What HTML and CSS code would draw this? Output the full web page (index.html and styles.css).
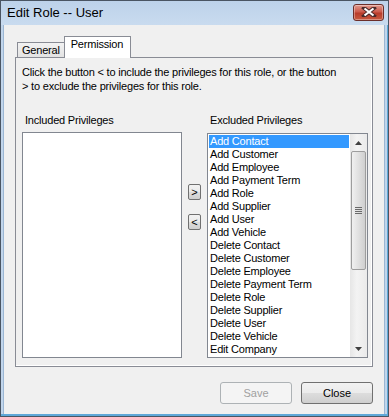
FILE: index.html
```html
<!DOCTYPE html>
<html lang="en">
<head>
<meta charset="utf-8">
<title>Edit Role -- User</title>
<link rel="stylesheet" href="styles.css">
</head>
<body>
<div class="window">
	<div class="titlebar">
		<span class="title">Edit Role -- User</span>
		<span class="closebox">
			<svg width="16" height="10" viewBox="0 0 16 10">
				<path d="M3 1 L13 9 M13 1 L3 9" stroke="#4a2a2a" stroke-width="4" stroke-linecap="square"/>
				<path d="M3.5 1.5 L12.5 8.5 M12.5 1.5 L3.5 8.5" stroke="#fff" stroke-width="2.2"/>
			</svg>
		</span>
	</div>
	<div class="client">
		<div class="tabs">
			<span class="tab">General</span>
			<span class="tab tab_on">Permission</span>
		</div>
		<div class="tabpage">
			<p class="hint">Click the button &lt; to include the privileges for this role, or the button &gt; to exclude the privileges for this role.</p>
			<div class="lists">
				<span class="lbl">Included Privileges</span>
				<span></span>
				<span class="lbl">Excluded Privileges</span>

				<div class="listbox incl"></div>
				<div class="movers">
					<button class="mover">&gt;</button>
					<button class="mover">&lt;</button>
				</div>
				<div class="listbox excl">
					<ul class="items">
						<li class="sel">Add Contact</li>
						<li>Add Customer</li>
						<li>Add Employee</li>
						<li>Add Payment Term</li>
						<li>Add Role</li>
						<li>Add Supplier</li>
						<li>Add User</li>
						<li>Add Vehicle</li>
						<li>Delete Contact</li>
						<li>Delete Customer</li>
						<li>Delete Employee</li>
						<li>Delete Payment Term</li>
						<li>Delete Role</li>
						<li>Delete Supplier</li>
						<li>Delete User</li>
						<li>Delete Vehicle</li>
						<li>Edit Company</li>
					</ul>
					<div class="vscroll">
						<span class="sc_btn"><svg width="7" height="4" viewBox="0 0 7 4"><path d="M0 4 L3.5 0 L7 4 Z" fill="#404040"/></svg></span>
						<div class="sc_track">
							<div class="sc_thumb"><span class="grip"></span></div>
						</div>
						<span class="sc_btn"><svg width="7" height="4" viewBox="0 0 7 4"><path d="M0 0 L7 0 L3.5 4 Z" fill="#404040"/></svg></span>
					</div>
				</div>
			</div>
		</div>
		<div class="footer">
			<button class="btn" disabled>Save</button>
			<button class="btn">Close</button>
		</div>
	</div>
</div>
</body>
</html>
```

FILE: styles.css
```css
body { margin: 0; font-family: "Liberation Sans", Arial, sans-serif; font-size: 11px; letter-spacing: -0.2px; color: #000; }

.window {
    width: 389px;
    height: 417px;
    box-sizing: border-box;
    display: flex;
    flex-direction: column;
    background: #c1d5eb;
    border: 1px solid #4a5563;
    padding: 0 3px 2px 2px;
    box-shadow: inset 0 -2px 0 #5fa8d8, inset -1px 0 0 #5fa8d8;
}

.titlebar {
    height: 24px;
    display: flex;
    align-items: center;
    justify-content: space-between;
    background: linear-gradient(#bdd2ea, #c9dbef);
    margin: 0 -3px 0 -2px;
    padding: 0 4px 0 6px;
}
.title { font-size: 13px; letter-spacing: 0; color: #000; margin-top: -1px; }
.closebox {
    width: 29px;
    height: 15px;
    margin-top: -2px;
    display: flex;
    align-items: center;
    justify-content: center;
    border: 1px solid #6b2e2a;
    border-radius: 3px;
    background: linear-gradient(#e19a8f, #cc5b4c 45%, #b83c2b 55%, #c85a40);
    box-shadow: inset 0 0 0 1px rgba(255,255,255,0.35);
}

.client {
    flex: 1;
    display: flex;
    flex-direction: column;
    background: #f0f0f0;
    border-left: 1px solid #9bb6d3;
    border-right: 1px solid #9bb6d3;
    padding: 12px 11px 9px 11px;
}

.tabs { display: flex; align-items: flex-end; padding-left: 2px; height: 20px; position: relative; z-index: 1; }
.tab {
    height: 14px;
    padding: 0 4px;
    border: 1px solid #898c95;
    border-bottom: none;
    background: linear-gradient(#f2f2f2, #e3e3e3);
    line-height: 15px;
}
.tab_on {
    height: 21px;
    margin-left: -1px;
    margin-bottom: -1px;
    padding: 0 7px 0 6px;
    background: #fff;
    line-height: 15px;
}

.tabpage {
    height: 310px;
    box-sizing: border-box;
    border: 1px solid #898c95;
    box-shadow: inset -1px -1px 0 #fff;
    padding: 7px 5px 0 6px;
}
.hint { margin: 0; line-height: 14px; max-width: 318px; }

.lists {
    margin-top: 20px;
    display: grid;
    grid-template-columns: 160px 25px 161px;
    grid-template-rows: 13px 226px;
    row-gap: 6px;
}
.lbl { line-height: 13px; padding-left: 3px; margin-top: 1px; }

.listbox { border: 1px solid #828790; background: #fff; box-sizing: border-box; }
.excl { display: flex; margin-top: 1px; height: 225px; }

.items { list-style: none; margin: 0; padding: 1px; flex: 1; }
.items li { height: 13px; line-height: 13px; padding-left: 1px; white-space: nowrap; }
.items .sel { background: #3399ff; color: #fff; }

.vscroll { width: 17px; display: flex; flex-direction: column; background: linear-gradient(90deg, #e6e6e6, #f3f3f3 40%, #eaeaea); }
.sc_btn { height: 17px; display: flex; align-items: center; justify-content: center; }
.sc_track { flex: 1; }
.sc_thumb {
    height: 119px;
    margin: 0 1px;
    box-sizing: border-box;
    border: 1px solid #9d9d9d;
    border-radius: 2px;
    background: linear-gradient(90deg, #f0f0f0, #e0e0e0 50%, #cfcfcf);
    display: flex;
    align-items: center;
    justify-content: center;
}
.grip { width: 7px; height: 7px; background: repeating-linear-gradient(#6a6a6a 0 1px, transparent 1px 2px); }

.movers { display: flex; flex-direction: column; gap: 14px; padding: 52px 0 0 6px; }
.mover {
    width: 13px;
    height: 16px;
    padding: 0;
    font: 11px "Liberation Sans", sans-serif;
    border: 1px solid #707070;
    border-radius: 2px;
    background: linear-gradient(#f2f2f2, #ebebeb 50%, #dddddd 50%, #cfcfcf);
}

.footer { display: flex; justify-content: flex-end; gap: 9px; margin-top: 15px; }
.btn {
    width: 72px;
    height: 22px;
    font: 11px "Liberation Sans", sans-serif;
    color: #000;
    border: 1px solid #707070;
    border-radius: 3px;
    background: linear-gradient(#f2f2f2, #ebebeb 50%, #dddddd 50%, #cfcfcf);
}
.btn:disabled { color: #a0a0a0; border-color: #adb2b5; background: #f4f4f4; }
```
